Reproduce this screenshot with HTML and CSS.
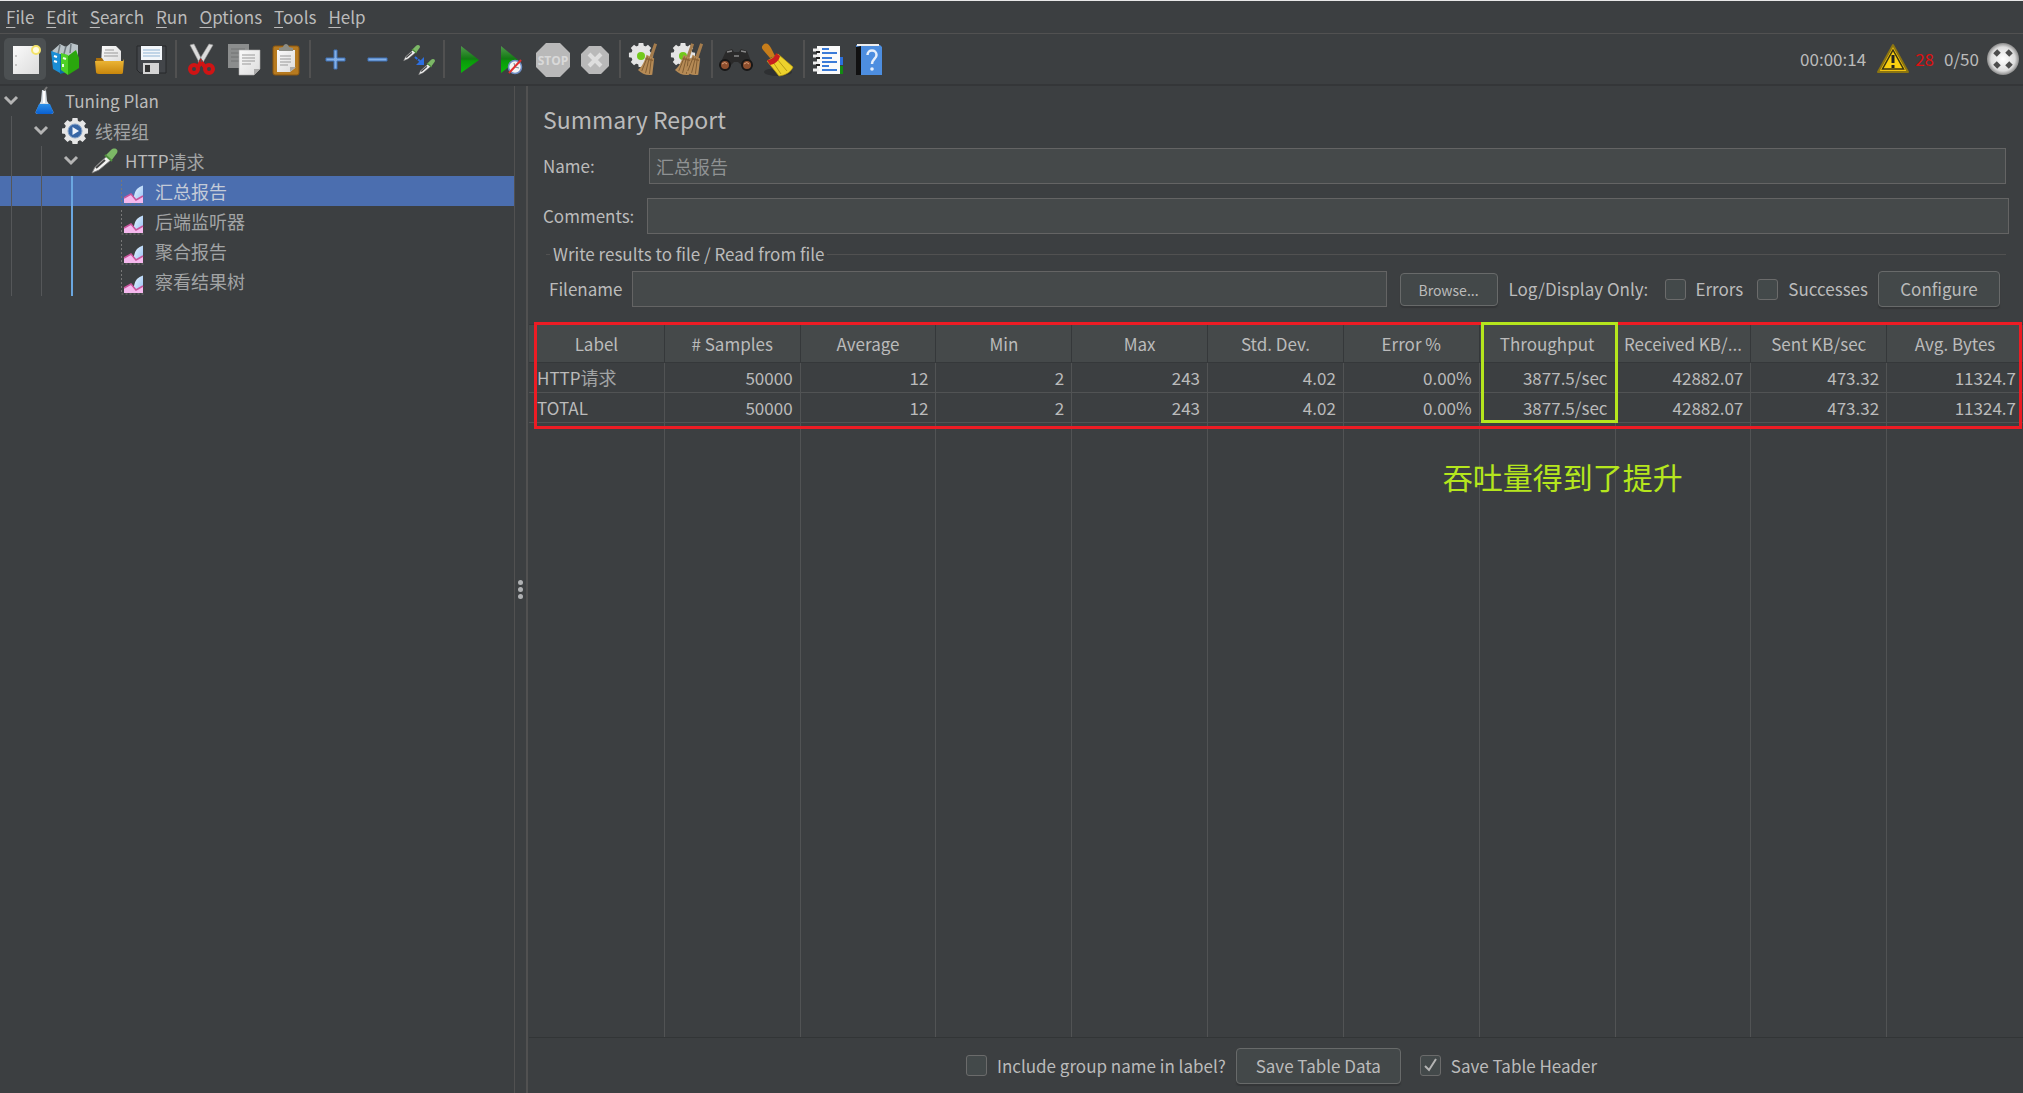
FILE: index.html
```html
<!DOCTYPE html>
<html lang="en">
<head>
<meta charset="utf-8">
<title>Tuning Plan - Summary Report</title>
<link rel="stylesheet" href="styles.css">
</head>
<body>
<svg class="defs" aria-hidden="true">
  <defs>
    <linearGradient id="gold" x1="0" y1="0" x2="0" y2="1"><stop offset="0" stop-color="#f0bb3a"/><stop offset="1" stop-color="#c8860c"/></linearGradient>
    <linearGradient id="paper" x1="0" y1="0" x2="1" y2="1"><stop offset="0" stop-color="#fafafa"/><stop offset="1" stop-color="#dcdcdc"/></linearGradient>
    <linearGradient id="green" x1="0" y1="0" x2="0" y2="1"><stop offset="0" stop-color="#4f9a4b"/><stop offset=".48" stop-color="#117a12"/><stop offset=".55" stop-color="#0a9a0a"/><stop offset="1" stop-color="#0bb80b"/></linearGradient>
    <linearGradient id="liquid" x1="0" y1="0" x2="0" y2="1"><stop offset="0" stop-color="#2b8fe8"/><stop offset="1" stop-color="#0a5fd0"/></linearGradient>
    <linearGradient id="sky" x1="0" y1="0" x2="1" y2="1"><stop offset="0" stop-color="#eaf4ff"/><stop offset="1" stop-color="#8fc0f5"/></linearGradient>
    <radialGradient id="ball"><stop offset="0" stop-color="#ffffff"/><stop offset=".75" stop-color="#dddddd"/><stop offset="1" stop-color="#8a8a8a"/></radialGradient>
    <symbol id="chevron" viewBox="0 0 22 30"><path d="M5 11l6 6 6-6" fill="none" stroke="#b4b4b4" stroke-width="3"/></symbol>
    <symbol id="chart" viewBox="0 0 28 30">
      <path d="M.5 4v24H24" fill="none" stroke="#777" stroke-dasharray="2 2"/>
      <path d="M13 27V20c1-6 4-9 9-10.500V27z" fill="url(#sky)"/>
      <path d="M3 27v-5l7-4 5 6 7-4v7z" fill="#f5b8ee"/><path d="M3 22l7-4 5 6 7-4" fill="none" stroke="#c8559b" stroke-width="1.500"/>
    </symbol>
    <symbol id="gearbody" viewBox="0 0 28 28">
      <circle cx="14" cy="14" r="10.500"/><path d="M11.500 1h5l.8 5h-6.600zM11.500 27h5l.8-5h-6.600zM1 11.500v5l5 .8v-6.600zM27 11.500v5l-5 .8v-6.600zM3 6.500L6.500 3l4 3-4.500 4.500zM25 6.500L21.500 3l-4 3 4.500 4.500zM3 21.500L6.500 25l4-3L6 17.500zM25 21.500L21.500 25l-4-3 4.500-4.500z"/>
    </symbol>
    <symbol id="brush" viewBox="0 0 22 36">
      <path d="M18 1l3 1-5 15-3-2z" fill="#a47c4d"/><path d="M10 13l8 4-2 17c-6 1-11-1-15-5 4-3 7-9 9-16z" fill="#b58a55"/>
      <path d="M11 15L5 30M13 16L9 32M15 17l-2 16" stroke="#7d5a31" fill="none"/><path d="M9 17l8 2" stroke="#8d6437" stroke-width="1.500"/>
    </symbol>
    <symbol id="pipette" viewBox="0 0 28 28">
      <path d="M1 26l3-6L16 9l4 4L8 23z" fill="#f2f2f2" stroke="#777" stroke-width=".8"/><path d="M5 21l9-8" stroke="#444" stroke-width="2"/>
      <path d="M15 8l5-5c3-3 8-1 6 3l-6 8z" fill="#7cb866"/><path d="M14 8l7 6" stroke="#4f8e3d" stroke-width="2"/>
    </symbol>
  </defs>
</svg>

<div class="app">
  <nav class="menu">
    <button><u>F</u>ile</button><button><u>E</u>dit</button><button><u>S</u>earch</button><button><u>R</u>un</button><button><u>O</u>ptions</button><button><u>T</u>ools</button><button><u>H</u>elp</button>
  </nav>

  <header class="toolbar">
    <button class="tool active" aria-label="New"><svg viewBox="0 0 42 42"><path d="M9 8h26v28H9z" fill="url(#paper)"/><path d="M11 18h2M11 27h2" stroke="#999"/><circle cx="32" cy="12" r="4" fill="#fffbe0" stroke="#f3e26a" stroke-width="2"/></svg></button>
    <button class="tool" aria-label="Templates"><svg viewBox="0 0 42 42"><path d="M6 13l8-7 6 3 5-4 7 2v14l-18 3z" fill="#b9c3c8"/><path d="M14 7l-2 9M20 8l-2 8M25 6l-1 9" stroke="#707a80" stroke-width="1.500"/><path d="M5 13l9 3v19l-7-4z" fill="#1b8ed6"/><path d="M14 16l7 1v17l-7 2z" fill="#0d6da8"/><path d="M8 18l3 1M8 23l3 1" stroke="#fff" stroke-width="2"/><path d="M15 15l7 2v20l-7-5z" fill="#4ed125"/><path d="M22 18l8-6 3 8v10l-11 7z" fill="#2aa70d"/><path d="M17 20l3 1M17 26v3" stroke="#e8ffe0" stroke-width="2"/></svg></button>
    <button class="tool" aria-label="Open"><svg viewBox="-1 0 42 42"><path d="M13 8h14l5 5v14H12z" fill="url(#paper)"/><path d="M16 12h9M15 15h14M15 18h14" stroke="#999"/><path d="M7 20h6l2 3h18v11H8z" fill="#a96f0c"/><path d="M6 23h28l1-2-1 13c0 2-1 2-3 2H10c-2 0-3-1-3-2z" fill="url(#gold)"/></svg></button>
    <button class="tool" aria-label="Save"><svg viewBox="-1 0 42 42"><path d="M6 8h29v27H9l-3-3z" fill="#43464a" stroke="#26282a"/><path d="M10 8h21v14H10z" fill="#f2f6fa"/><path d="M12 12h17M12 15h17M12 18h17" stroke="#8fb3d4"/><path d="M12 25h16v11H12z" fill="#d4d4d4"/><path d="M14 27h5v7h-5z" fill="#333"/></svg></button>
    <i class="sep"></i>
    <button class="tool" aria-label="Cut"><svg viewBox="0 0 42 42"><path d="M10 7l4-1 9 18-3 2zM33 7l-4-1-11 18 4 2z" fill="#dcdcdc" stroke="#999" stroke-width=".6"/><g fill="none" stroke="#d01414" stroke-width="4"><circle cx="14" cy="31" r="4"/><circle cx="29" cy="31" r="4"/><path d="M18 29l3-5 4 5"/></g><circle cx="21.500" cy="23" r="1" fill="#555"/></svg></button>
    <button class="tool" aria-label="Copy"><svg viewBox="0 0 42 42"><path d="M6 6h21v24H6z" fill="#8b8d8d"/><path d="M9 11h14M9 15h14M9 19h14M9 23h14" stroke="#707272"/><path d="M17 12h21v19l-6 6H17z" fill="url(#paper)" stroke="#aaa" stroke-width=".6"/><path d="M20 17h13M20 20h13M20 23h13M20 26h9" stroke="#999"/><path d="M32 37v-6h6z" fill="#aaa"/></svg></button>
    <button class="tool" aria-label="Paste"><svg viewBox="0 0 42 42"><rect x="9" y="8" width="26" height="29" rx="2" fill="#b67a20" stroke="#8b570e"/><path d="M13 12h18v18l-5 4H13z" fill="url(#paper)"/><path d="M16 18h11M16 21h11M16 24h11M16 27h8" stroke="#999"/><path d="M26 34v-5h6z" fill="#aaa"/><path d="M15 13v-3l4-1c1-4 5-4 6 0l4 1v3z" fill="#8c8d86"/></svg></button>
    <i class="sep"></i>
    <button class="tool" aria-label="Expand all"><svg viewBox="0 0 42 42"><path d="M20 12h3v8h8v3h-8v8h-3v-8h-8v-3h8z" fill="#83afe6" stroke="#3f73b8"/></svg></button>
    <button class="tool" aria-label="Collapse all"><svg viewBox="0 0 42 42"><path d="M12 20h19v3H12z" fill="#83afe6" stroke="#3f73b8"/></svg></button>
    <button class="tool" aria-label="Toggle"><svg viewBox="0 0 42 42"><use href="#pipette" x="5" y="6" width="18" height="18"/><use href="#pipette" x="20" y="20" width="18" height="18"/><path d="M17 19l6 5" stroke="#2d6fe0" stroke-width="2" stroke-dasharray="3 1"/><path d="M26 19v8h-8z" fill="#2d6fe0"/></svg></button>
    <i class="sep"></i>
    <button class="tool" aria-label="Start"><svg viewBox="1 0 42 42"><path d="M14 8l18 14-18 13z" fill="url(#green)"/></svg></button>
    <button class="tool" aria-label="Start no pauses"><svg viewBox="0 0 42 42"><path d="M11 8l17 14-17 13z" fill="url(#green)"/><circle cx="25" cy="29" r="6.500" fill="#f4f4f4" stroke="#6e8ec4" stroke-width="1.500"/><path d="M24 25l1 4 4 1" stroke="#789" fill="none"/><path d="M19 35l12-13" stroke="#e03030" stroke-width="2"/></svg></button>
    <button class="tool" aria-label="Stop" disabled><svg viewBox="0 0 42 42"><path d="M14 5h14l10 10v14L28 39H14L4 29V15z" fill="#b9b9b9"/><text x="21" y="27" class="stop">STOP</text></svg></button>
    <button class="tool" aria-label="Shutdown" disabled><svg viewBox="0 0 42 42"><path d="M15 8h12l8 8v12l-8 8H15l-8-8V16z" fill="#b9b9b9"/><path d="M15 16l12 12M27 16L15 28" stroke="#dedede" stroke-width="4"/></svg></button>
    <i class="sep"></i>
    <button class="tool" aria-label="Clear"><svg viewBox="0 0 42 42"><use href="#gearbody" x="4" y="4" width="26" height="26" fill="#e4e4e4"/><circle cx="17" cy="18" r="4" fill="#72c91c"/><use href="#brush" x="13" y="4" width="21" height="35"/></svg></button>
    <button class="tool" aria-label="Clear all"><svg viewBox="0 0 42 42"><use href="#gearbody" x="4" y="4" width="26" height="26" fill="#e4e4e4"/><circle cx="17" cy="18" r="4" fill="#72c91c"/><use href="#brush" x="8" y="4" width="21" height="35"/><use href="#brush" x="17" y="4" width="21" height="35"/></svg></button>
    <i class="sep"></i>
    <button class="tool" aria-label="Search"><svg viewBox="1 0 42 42"><path d="M11 13l6-2 2 3h5l2-3 6 2 6 15-7 3-8-7h-4l-7 7-8-3z" fill="#2a2a2a"/><path d="M12 14l5-1M26 13l5 1M19 18h5" stroke="#888" stroke-width="1.500"/><circle cx="10" cy="27" r="5" fill="#8e4f2e" stroke="#171717" stroke-width="2"/><circle cx="32" cy="27" r="5" fill="#8e4f2e" stroke="#171717" stroke-width="2"/><path d="M7 26q3-3 5 0M29 26q3-3 5 0" stroke="#d9a07a" fill="none"/></svg></button>
    <button class="tool" aria-label="Reset search"><svg viewBox="2 0 42 42"><ellipse cx="22" cy="34" rx="14" ry="4" fill="#2e3032"/><path d="M7 7c3-3 6-1 8 3l4 8-5 2-6-7c-2-2-3-4-1-6z" fill="#c77d1a"/><path d="M22 16l15 13c-2 5-7 8-14 9L11 23z" fill="#edd22c" stroke="#b69a11" stroke-width=".7"/><path d="M21 21l10 12M17 24l8 12" stroke="#b89c14"/><path d="M11 22c4 0 8-3 9-7l4 3c-1 5-5 8-10 9z" fill="#c81e1e"/></svg></button>
    <i class="sep"></i>
    <button class="tool" aria-label="Function helper"><svg viewBox="1 0 42 42"><path d="M32 19h4v8h-4z" fill="#2b70dc"/><path d="M32 28h4v8h-4z" fill="#138a13"/><path d="M10 8h23v28H10z" fill="#fafafa"/><path d="M15 11h7M15 15h15M15 20h10M15 24h15M15 28h7M15 32h15" stroke="#3b7bd8" stroke-width="2"/><path d="M6 12h6M6 18h6M6 25h6M6 32h6" stroke="#eee" stroke-width="3"/><path d="M9 14h4M9 20h4M9 27h4" stroke="#222" stroke-width="2"/></svg></button>
    <button class="tool" aria-label="Help"><svg viewBox="2 0 42 42"><path d="M8 7h24l2 2v28H8z" fill="#4d8ee0"/><path d="M8 9l5-1v29H8z" fill="#111"/><path d="M9 7h22" stroke="#eee" stroke-width="2"/><path d="M19.500 17c0-6 9-6 9 0 0 4-4.500 4-4.500 9" fill="none" stroke="#e6effb" stroke-width="2.500"/><circle cx="24" cy="31" r="1.800" fill="#e6effb"/></svg></button>
    <div class="status">
      <span>00:00:14</span>
      <svg class="warn" viewBox="0 0 34 32"><path d="M17 2l15 27H2z" fill="#f2c311" stroke="#8c7510" stroke-width="2" stroke-linejoin="round"/><path d="M17 7l10.500 19h-21z" fill="#f8cf10" stroke="#3b3410" stroke-width="1.500"/><path d="M17 12v8M17 22v3" stroke="#222" stroke-width="3"/></svg>
      <span class="errors">28</span>
      <span class="threads">0/50</span>
      <svg class="remote" viewBox="0 0 34 34"><circle cx="17" cy="17" r="16" fill="url(#ball)"/><path d="M9 13l4-4M21 9l4 4M9 21l4 4M21 25l4-4" stroke="#4d4d4d" stroke-width="5"/></svg>
    </div>
  </header>

  <div class="body">
    <aside class="tree">
      <ul>
        <li><svg class="chev"><use href="#chevron"/></svg><svg class="ico" viewBox="0 0 28 30"><path d="M11 4h4l1 11 6 10c1 2 0 3-2 3H7c-2 0-3-1-2-3l5-10z" fill="#d5dde4"/><path d="M8 18h11l3 7c1 2 0 3-2 3H7c-2 0-3-1-2-3z" fill="url(#liquid)"/><path d="M13 5l3-4" stroke="#777" stroke-width="2"/><path d="M13 5v12" stroke="#fff" stroke-width="2"/></svg>Tuning Plan</li>
        <li class="cjk"><i class="guide"></i><svg class="chev"><use href="#chevron"/></svg><svg class="ico" viewBox="0 0 28 30"><use href="#gearbody" y="1" width="28" height="28" fill="#e6e6e6"/><circle cx="14" cy="15" r="7" fill="#3766a5" stroke="#8aa5c8"/><path d="M11.500 11l6.500 4-6.500 4z" fill="#eef3fa"/></svg>线程组</li>
        <li><i class="guide"></i><i class="guide"></i><svg class="chev"><use href="#chevron"/></svg><svg class="ico" viewBox="0 0 28 30"><use href="#pipette" y="1" width="28" height="28"/></svg>HTTP<span class="cjk">请求</span></li>
        <li class="cjk selected"><i class="guide"></i><i class="guide"></i><i class="guide current"></i><i class="chev"></i><svg class="ico"><use href="#chart"/></svg>汇总报告</li>
        <li class="cjk"><i class="guide"></i><i class="guide"></i><i class="guide current"></i><i class="chev"></i><svg class="ico"><use href="#chart"/></svg>后端监听器</li>
        <li class="cjk"><i class="guide"></i><i class="guide"></i><i class="guide current"></i><i class="chev"></i><svg class="ico"><use href="#chart"/></svg>聚合报告</li>
        <li class="cjk"><i class="guide"></i><i class="guide"></i><i class="guide current"></i><i class="chev"></i><svg class="ico"><use href="#chart"/></svg>察看结果树</li>
      </ul>
    </aside>
    <div class="splitter"><i></i><i></i><i></i></div>

    <main class="panel">
      <h1>Summary Report</h1>
      <div class="field name"><label for="name">Name:</label><input id="name" type="text" value="汇总报告"></div>
      <div class="field comments"><label for="comments">Comments:</label><input id="comments" type="text"></div>
      <section class="group">
        <h2>Write results to file / Read from file</h2>
        <div class="filerow">
          <label for="filename">Filename</label><input id="filename" type="text">
          <button class="btn browse">Browse...</button>
          <span class="only">Log/Display Only:</span>
          <label class="check"><input type="checkbox">Errors</label>
          <label class="check"><input type="checkbox">Successes</label>
          <button class="btn configure">Configure</button>
        </div>
      </section>

      <div class="results">
        <table>
          <thead>
            <tr><th>Label</th><th># Samples</th><th>Average</th><th>Min</th><th>Max</th><th>Std. Dev.</th><th>Error %</th><th class="marked">Throughput<i class="mark"></i></th><th>Received KB/...</th><th>Sent KB/sec</th><th>Avg. Bytes</th></tr>
          </thead>
          <tbody>
            <tr><td>HTTP<span class="cjk">请求</span></td><td>50000</td><td>12</td><td>2</td><td>243</td><td>4.02</td><td>0.00%</td><td>3877.5/sec</td><td>42882.07</td><td>473.32</td><td>11324.7</td></tr>
            <tr><td>TOTAL</td><td>50000</td><td>12</td><td>2</td><td>243</td><td>4.02</td><td>0.00%</td><td>3877.5/sec</td><td>42882.07</td><td>473.32</td><td>11324.7</td></tr>
            <tr class="rest"><td></td><td></td><td></td><td></td><td></td><td></td><td></td><td class="marked"><p class="note">吞吐量得到了提升</p></td><td></td><td></td><td></td></tr>
          </tbody>
        </table>
        <i class="frame"></i>
      </div>

      <footer class="actions">
        <label class="check"><input type="checkbox">Include group name in label?</label>
        <button class="btn save">Save Table Data</button>
        <label class="check"><input type="checkbox" checked>Save Table Header</label>
      </footer>
    </main>
  </div>
</div>
</body>
</html>
```
FILE: styles.css
```css
* { box-sizing: border-box; }

body {
  margin: 0;
  background: #3c3f41;
  color: #bbbbbb;
  font: 17px/30px "Noto Sans CJK SC", "Noto Sans", sans-serif;
}

button, input {
  font: inherit;
  color: inherit;
  margin: 0;
}

.defs { position: absolute; width: 0; height: 0; }

.app {
  display: flex;
  flex-direction: column;
  height: 100vh;
  border-top: 1px solid #e8e8e8;
}

/* menu bar */
.menu {
  display: flex;
  gap: 12px;
  height: 33px;
  flex: none;
  padding: 0 6px;
  border-bottom: 1px solid #515151;
}
.menu button {
  border: 0;
  padding: 0;
  background: none;
  line-height: 32px;
}
.menu u { text-underline-offset: 3px; }

/* tool bar */
.toolbar {
  display: flex;
  align-items: center;
  height: 52px;
  flex: none;
  padding: 0 3px 0 4px;
  border-bottom: 2px solid #343638;
}
.tool {
  width: 42px;
  height: 42px;
  padding: 0;
  border: 0;
  border-radius: 5px;
  background: none;
}
.tool svg { display: block; width: 42px; height: 42px; }
.tool.active { background: #4c5052; }
.stop {
  font: bold 12px "Open Sans", sans-serif;
  fill: #d9d9d9;
  text-anchor: middle;
}
.sep {
  width: 2px;
  height: 38px;
  margin: 0 3px;
  background: #515151;
}
.status {
  display: flex;
  align-items: center;
  margin-left: auto;
}
.warn { width: 34px; height: 32px; margin: 0 5px 0 10px; }
.errors { color: #dd1111; }
.threads { margin: 0 7px 0 10px; }
.remote { width: 34px; height: 34px; }

/* split body */
.body {
  display: flex;
  flex: 1;
  min-height: 0;
}
.tree {
  width: 514px;
  flex: none;
}
.tree ul {
  list-style: none;
  margin: 0;
  padding: 0;
}
.tree li {
  display: flex;
  height: 30px;
  line-height: 30px;
}
.tree .selected { background: #4b6eaf; }
.guide {
  width: 19px;
  margin-left: 11px;
  border-left: 1px solid #555759;
}
.guide.current { border-left: 2px solid #6ba7e0; }
.chev { width: 22px; height: 30px; margin-right: 9px; }
.ico { width: 28px; height: 30px; margin-right: 6px; }
.cjk { font-size: 18px; color: #a2a4a5; }
.selected.cjk { color: #c4cbd8; }

.splitter {
  width: 14px;
  flex: none;
  display: flex;
  flex-direction: column;
  align-items: center;
  justify-content: center;
  gap: 2px;
  border: solid #515151;
  border-width: 0 2px 0 1px;
}
.splitter i {
  width: 5px;
  height: 5px;
  border-radius: 50%;
  background: #afb1b3;
}

/* right-hand panel */
.panel {
  flex: 1;
  min-width: 0;
  display: flex;
  flex-direction: column;
}
h1 {
  margin: 15px 15px 11px;
  font-size: 23px;
  font-weight: 400;
  line-height: 36px;
}
.field {
  display: flex;
  align-items: center;
  padding-left: 15px;
  margin-bottom: 14px;
}
.field.name { padding-right: 17px; }
.field.comments { padding-right: 14px; margin-bottom: 5px; }
.name label { width: 106px; }
.comments label { width: 104px; }
input[type="text"] {
  flex: 1;
  min-width: 0;
  height: 36px;
  padding: 0 6px;
  border: 1px solid #646464;
  background: #45494a;
}
#name { font-size: 18px; color: #8f9293; }

.group { padding: 0 17px 0 18px; }
h2 {
  display: flex;
  align-items: center;
  gap: 3px;
  margin: 0 0 2px;
  font-size: 17px;
  font-weight: 400;
  line-height: 30px;
}
h2::before, h2::after {
  content: "";
  height: 1px;
  width: 4px;
  background: #515151;
}
h2::after { flex: 1; }
.filerow {
  display: flex;
  align-items: center;
  padding: 0 6px 0 3px;
}
#filename { margin: 0 13px 0 10px; }
.btn {
  height: 36px;
  padding: 0;
  line-height: 32px;
  border: 1px solid #686a6a;
  border-radius: 4px;
  background: #434849;
  box-shadow: 0 2px 1px #343638;
}
.browse { width: 98px; height: 33px; font-size: 14px; }
.only { width: 167px; padding-left: 11px; }
.configure { width: 122px; margin-left: 10px; }
.check {
  display: flex;
  align-items: center;
  white-space: nowrap;
}
.filerow .check + .check { margin-left: 14px; }
.check input {
  appearance: none;
  width: 21px;
  height: 21px;
  margin: 0 10px 0 0;
  border: 1px solid #6b6b6b;
  border-radius: 3px;
  background: #43494a;
}
.check input:checked {
  background: #43494a url('data:image/svg+xml,<svg xmlns="http://www.w3.org/2000/svg" viewBox="0 0 19 19"><path d="M4 10l4 4 7-11" fill="none" stroke="%23b4b4b4" stroke-width="2"/></svg>');
}

/* results table */
.results {
  position: relative;
  flex: 1;
  min-height: 0;
  margin: 17px 0 0 1px;
  border-bottom: 1px solid #323536;
}
table {
  width: 100%;
  height: 100%;
  table-layout: fixed;
  border-collapse: separate;
  border-spacing: 0;
}
th {
  height: 39px;
  padding: 0;
  font-weight: 400;
  background: #45494a;
  border-right: 1px solid #35383a;
  border-bottom: 1px solid #35383a;
  border-top: 1px solid #35383a;
  white-space: nowrap;
}
td {
  height: 30px;
  padding: 0 7px 0 0;
  line-height: 29px;
  text-align: right;
  border-right: 1px solid #515354;
  border-bottom: 1px solid #515354;
}
td:first-child { padding-left: 8px; text-align: left; }
td .cjk { line-height: 1; }
th:last-child, td:last-child { border-right: 0; }
.rest td { height: auto; border-bottom: 0; vertical-align: top; }
.marked { position: relative; }

/* annotations drawn over the table */
.mark {
  position: absolute;
  z-index: 2;
  top: -3px;
  left: 1px;
  right: -3px;
  height: 101px;
  border: 3px solid #b5e61d;
}
.frame {
  position: absolute;
  top: -2px;
  left: 5px;
  right: 1px;
  height: 107px;
  border: 3px solid #ed1c24;
}
.note {
  position: absolute;
  top: 31px;
  left: -37px;
  margin: 0;
  font-size: 30px;
  line-height: 44px;
  white-space: nowrap;
  color: #b5e61d;
}

.actions {
  flex: none;
  display: flex;
  align-items: center;
  justify-content: center;
  height: 55px;
  padding-left: 12px;
}
.save { width: 165px; margin: 0 19px 0 10px; }
```
